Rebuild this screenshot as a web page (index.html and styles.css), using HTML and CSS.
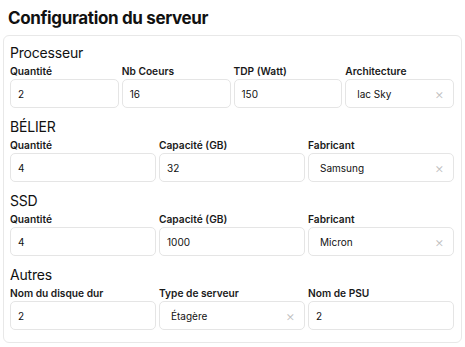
FILE: index.html
```html
<!DOCTYPE html>
<html lang="fr">
<head>
<meta charset="utf-8">
<link rel="stylesheet" href="styles.css">
</head>
<body>
<h1 class="title">Configuration du serveur</h1>
<div class="card">
  <section class="group">
    <h2 class="group-title">Processeur</h2>
    <div class="row cols-4">
      <div class="field"><label class="label">Quantité</label><div class="input">2</div></div>
      <div class="field"><label class="label">Nb Coeurs</label><div class="input">16</div></div>
      <div class="field"><label class="label">TDP (Watt)</label><div class="input">150</div></div>
      <div class="field"><label class="label">Architecture</label><div class="input select"><span>lac Sky</span><span class="clear">×</span></div></div>
    </div>
  </section>
  <section class="group">
    <h2 class="group-title">BÉLIER</h2>
    <div class="row cols-3">
      <div class="field"><label class="label">Quantité</label><div class="input">4</div></div>
      <div class="field"><label class="label">Capacité (GB)</label><div class="input">32</div></div>
      <div class="field"><label class="label">Fabricant</label><div class="input select"><span>Samsung</span><span class="clear">×</span></div></div>
    </div>
  </section>
  <section class="group">
    <h2 class="group-title">SSD</h2>
    <div class="row cols-3">
      <div class="field"><label class="label">Quantité</label><div class="input">4</div></div>
      <div class="field"><label class="label">Capacité (GB)</label><div class="input">1000</div></div>
      <div class="field"><label class="label">Fabricant</label><div class="input select"><span>Micron</span><span class="clear">×</span></div></div>
    </div>
  </section>
  <section class="group last">
    <h2 class="group-title">Autres</h2>
    <div class="row cols-3">
      <div class="field"><label class="label">Nom du disque dur</label><div class="input">2</div></div>
      <div class="field"><label class="label">Type de serveur</label><div class="input select"><span>Étagère</span><span class="clear">×</span></div></div>
      <div class="field"><label class="label">Nom de PSU</label><div class="input">2</div></div>
    </div>
  </section>
</div>
</body>
</html>
```

FILE: styles.css
```css
* { box-sizing: border-box; }
html, body { margin: 0; padding: 0; background: #ffffff; }
body {
  font-family: Inter, "Noto Sans", "Liberation Sans", sans-serif;
  color: #111111;
  width: 465px;
  height: 347px;
  overflow: hidden;
}
.title {
  margin: 6px 0 5px 8px;
  font-size: 17px;
  line-height: 24px;
  font-weight: 700;
  letter-spacing: -0.35px;
}
.card {
  margin: 0 3px;
  width: 459px;
  border: 1px solid #e8e8e8;
  border-radius: 6px;
  padding: 7px 7px 12px 6px;
}
.group { margin-bottom: 9px; }
.group.last { margin-bottom: 0; }
.group-title {
  margin: 0 0 2px 0;
  font-size: 14px;
  line-height: 20px;
  font-weight: 400;
  letter-spacing: -0.2px;
}
.row { display: grid; gap: 3px; }
.cols-4 { grid-template-columns: repeat(4, 1fr); }
.cols-3 { grid-template-columns: repeat(3, 1fr); }
.field { display: flex; flex-direction: column; }
.label {
  font-size: 10.2px;
  line-height: 13px;
  font-weight: 600;
  color: #1a1a1a;
  margin-bottom: 1px;
}
.input {
  height: 29px;
  border: 1px solid #e5e5e5;
  border-radius: 5px;
  padding: 0 7px;
  font-size: 10px;
  display: flex;
  align-items: center;
  color: #111111;
}
.select {
  justify-content: space-between;
  padding: 0 9px 0 11px;
}
.clear {
  color: #c0c0c0;
  font-size: 14px;
  line-height: 1;
  font-weight: 300;
}
```
